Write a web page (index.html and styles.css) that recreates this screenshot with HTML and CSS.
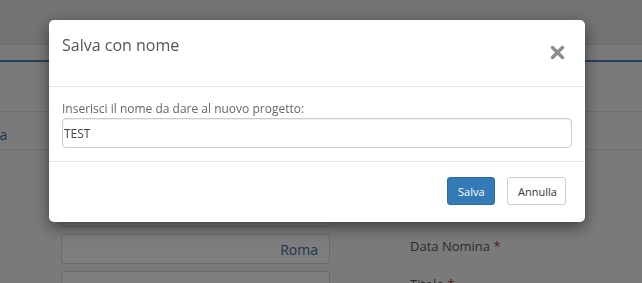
FILE: index.html
```html
<!DOCTYPE html>
<html lang="it">
<head>
    <meta charset="UTF-8">
    <meta name="viewport" content="width=device-width, initial-scale=1.0">
    <title>Salva con nome</title>
    <link rel="stylesheet" href="styles.css">
</head>
<body>
    <header class="topbar"></header>

    <main class="page">
        <div class="tab-row">
            <span class="tab-label">la</span>
        </div>

        <div class="form-grid">
            <div class="form-col">
                <div class="field"></div>
                <div class="field">Roma</div>
                <div class="field"></div>
            </div>
            <div class="form-col labels">
                <div class="form-label">Data Nomina <span class="req">*</span></div>
                <div class="form-label">Titolo <span class="req">*</span></div>
            </div>
        </div>
    </main>

    <div class="backdrop"></div>

    <div class="modal">
        <div class="modal-header">
            <h4 class="modal-title">Salva con nome</h4>
            <button class="close-btn" aria-label="Chiudi">
                <svg width="15" height="15" viewBox="0 0 15 15">
                    <path d="M2.5 2.5 L12.5 12.5 M12.5 2.5 L2.5 12.5" stroke="currentColor" stroke-width="3.4" stroke-linecap="round"/>
                </svg>
            </button>
        </div>
        <div class="modal-body">
            <label class="input-label" for="projectName">Inserisci il nome da dare al nuovo progetto:</label>
            <input type="text" id="projectName" class="text-input" value="TEST">
        </div>
        <div class="modal-footer">
            <button class="btn btn-primary">Salva</button>
            <button class="btn btn-default">Annulla</button>
        </div>
    </div>
</body>
</html>
```

FILE: styles.css
```css
:root {
    --primary-color: #337ab7;
    --border-color: #cccccc;
    --text-color: #555555;
}

* {
    box-sizing: border-box;
}

body {
    margin: 0;
    font-family: "Open Sans", "Noto Sans", sans-serif;
    background: #f5f5f5;
    color: #333;
    height: 283px;
    overflow: hidden;
}

.topbar {
    height: 45px;
    background: #e6e6e6;
    border-bottom: 1px solid #d6d6d6;
}

.page {
    margin-top: 15px;
    border-top: 2px solid #4f7fa8;
}

.tab-row {
    margin-top: 49px;
    height: 39px;
    border-top: 1px solid #dcdcdc;
    border-bottom: 1px solid #dcdcdc;
    display: flex;
    align-items: center;
    padding-top: 8px;
}

.tab-label {
    margin-left: -4px;
    font-size: 14px;
    color: #3a6f9c;
}

.form-grid {
    display: flex;
    padding-left: 61px;
    margin-top: 47px;
}

.form-col {
    display: flex;
    flex-direction: column;
    gap: 7px;
    width: 269px;
}

.field {
    height: 30px;
    border: 1px solid #d2d2d2;
    border-radius: 3px;
    background: #fafafa;
    font-size: 14px;
    color: #3a6f9c;
    display: flex;
    align-items: center;
    justify-content: flex-end;
    padding-right: 11px;
}

.labels {
    margin-left: 80px;
    padding-top: 40px;
    gap: 20px;
    width: auto;
}

.form-label {
    font-size: 13px;
    color: #555;
}

.req {
    color: #b03030;
}

.backdrop {
    position: fixed;
    inset: 0;
    background: rgba(0, 0, 0, 0.5);
}

.modal {
    position: fixed;
    left: 49px;
    top: 20px;
    width: 536px;
    height: 202px;
    background: #ffffff;
    border-radius: 5px;
    box-shadow: 0 5px 15px rgba(0, 0, 0, 0.5);
    display: flex;
    flex-direction: column;
}

.modal-header {
    height: 67px;
    padding: 13px 20px 0 13px;
    border-bottom: 1px solid #e5e5e5;
    display: flex;
    justify-content: space-between;
    align-items: flex-start;
}

.modal-title {
    margin: 0;
    font-size: 16px;
    font-weight: 400;
    line-height: 24px;
    color: var(--text-color);
}

.close-btn {
    margin-top: 12px;
    padding: 0;
    border: none;
    background: none;
    color: #8c8c8c;
    cursor: pointer;
    display: flex;
}

.modal-body {
    height: 75px;
    padding: 13px 13px 0 13px;
    border-bottom: 1px solid #e5e5e5;
    display: flex;
    flex-direction: column;
}

.input-label {
    font-size: 12px;
    line-height: 17px;
    color: #666;
    margin-bottom: 1px;
}

.text-input {
    height: 30px;
    width: 510px;
    border: 1px solid var(--border-color);
    border-radius: 4px;
    padding: 0 0 0 1px;
    font-family: inherit;
    font-size: 12px;
    color: #444;
    box-shadow: inset 0 1px 1px rgba(0, 0, 0, 0.075);
}

.modal-footer {
    flex: 1;
    display: flex;
    justify-content: flex-end;
    align-items: flex-start;
    gap: 12px;
    padding: 15px 19px 0 0;
}

.btn {
    height: 28px;
    padding: 0 10px;
    font-family: inherit;
    font-size: 11px;
    border-radius: 3px;
    cursor: pointer;
}

.btn-primary {
    width: 48px;
    background: var(--primary-color);
    border: 1px solid #2e6da4;
    color: #ffffff;
}

.btn-default {
    width: 59px;
    background: #ffffff;
    border: 1px solid var(--border-color);
    color: #333;
}
```
